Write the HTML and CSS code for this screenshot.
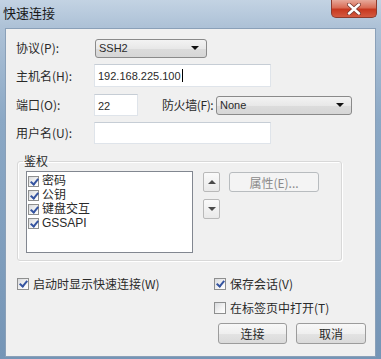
FILE: index.html
```html
<!DOCTYPE html>
<html>
  <head>
    <title>快速连接</title>
    <link rel="stylesheet" href="styles.css">
  </head>
  <body>
    <div class="window">
      <div class="titlebar">
        <span class="title">快速连接</span>
        <span class="close">
          <svg width="14" height="12" viewBox="0 0 14 12">
            <path d="M2 1.5 L12 10.5 M12 1.5 L2 10.5" stroke="#7a3a30" stroke-width="4" stroke-linecap="round"/>
            <path d="M2 1.5 L12 10.5 M12 1.5 L2 10.5" stroke="#ffffff" stroke-width="2.4" stroke-linecap="round"/>
          </svg>
        </span>
      </div>

      <div class="content">
        <div class="row row-proto">
          <span class="lbl">协议(P):</span>
          <div class="combo combo-proto">SSH2<span class="arrow"></span></div>
        </div>
        <div class="row row-host">
          <span class="lbl">主机名(H):</span>
          <div class="field field-wide">192.168.225.100<span class="caret"></span></div>
        </div>
        <div class="row row-port">
          <span class="lbl">端口(O):</span>
          <div class="field field-port">22</div>
          <span class="lbl-fw">防火墙(F):</span>
          <div class="combo combo-fw">None<span class="arrow"></span></div>
        </div>
        <div class="row row-user">
          <span class="lbl">用户名(U):</span>
          <div class="field field-wide"></div>
        </div>

        <fieldset class="group">
          <legend>鉴权</legend>
          <div class="auth">
            <ul class="list">
              <li><span class="cb on"></span>密码</li>
              <li><span class="cb on"></span>公钥</li>
              <li><span class="cb on"></span>键盘交互</li>
              <li><span class="cb on"></span>GSSAPI</li>
            </ul>
            <div class="arrows">
              <button class="btn-arrow"><span class="tri-up"></span></button>
              <button class="btn-arrow"><span class="tri-down"></span></button>
            </div>
            <button class="btn btn-prop">属性(E)...</button>
          </div>
        </fieldset>

        <div class="opts">
          <div class="opt"><span class="cb on"></span>启动时显示快速连接(W)</div>
          <div class="opt"><span class="cb on"></span>保存会话(V)</div>
          <div class="opt"></div>
          <div class="opt"><span class="cb"></span>在标签页中打开(T)</div>
        </div>

        <div class="actions">
          <button class="btn btn-ok">连接</button>
          <button class="btn btn-cancel">取消</button>
        </div>
      </div>
    </div>
  </body>
</html>
```

FILE: styles.css
```css
body {
  margin: 0;
  font-family: "Noto Sans CJK SC", "Liberation Sans", sans-serif;
  font-size: 12px;
  line-height: 14px;
  color: #2a2a2a;
}
.window {
  width: 381px;
  height: 359px;
  box-sizing: border-box;
  background: linear-gradient(to bottom, #c3d3e3 0, #aec2d7 26px, #8ba8c5 120px, #7595b6 100%);
  padding: 0 5px 2px 5px;
  display: flex;
  flex-direction: column;
}
.titlebar {
  height: 28px;
  display: flex;
  align-items: flex-start;
  justify-content: space-between;
}
.title {
  font-size: 13px;
  line-height: 14px;
  margin-top: 6px;
  margin-left: -2px;
  color: #1a1a1a;
}
.close {
  width: 44px;
  height: 17px;
  margin-right: -1px;
  border: 1px solid #8d3b2d;
  border-top: none;
  border-radius: 0 0 5px 5px;
  background: linear-gradient(to bottom, #e7a99a 0, #d96c55 45%, #c7381f 55%, #d45a40 100%);
  display: flex;
  align-items: center;
  justify-content: center;
}
.content {
  flex: 1;
  background: #f0f0f0;
  border: 1px solid #8aa0b8;
  padding: 8px 9px 0 10px;
  display: flex;
  flex-direction: column;
}
.row {
  display: flex;
  align-items: center;
  height: 22px;
}
.row-host {
  height: 23px;
  margin-top: 5px;
}
.row-port {
  margin-top: 7px;
}
.row-user {
  margin-top: 6px;
}
.lbl {
  width: 78px;
  white-space: nowrap;
}
.lbl-fw {
  margin-left: 24px;
  width: 54px;
  white-space: nowrap;
  letter-spacing: -0.4px;
}
.field {
  box-sizing: border-box;
  height: 100%;
  background: #fff;
  border: 1px solid #dfe4ea;
  border-top-color: #c6cdd5;
  font-family: "Liberation Sans", sans-serif;
  font-size: 11px;
  padding: 4px 3px 0 3px;
  display: flex;
  align-items: flex-start;
}
.field-wide {
  width: 177px;
}
.field-port {
  width: 44px;
}
.caret {
  width: 1px;
  height: 13px;
  background: #000;
  margin-left: 1px;
}
.combo {
  box-sizing: border-box;
  height: 19px;
  border: 1px solid #8a8a8a;
  border-radius: 3px;
  background: linear-gradient(to bottom, #f3f3f3 0, #e8e8e8 50%, #dcdcdc 51%, #d6d6d6 100%);
  font-family: "Liberation Sans", sans-serif;
  font-size: 11px;
  padding-left: 3px;
  display: flex;
  align-items: center;
  justify-content: space-between;
}
.combo-proto {
  width: 112px;
  margin-left: 1px;
}
.combo-fw {
  width: 136px;
}
.arrow {
  width: 0;
  height: 0;
  border-left: 4px solid transparent;
  border-right: 4px solid transparent;
  border-top: 4px solid #111;
  margin-right: 7px;
}
.group {
  margin: 10px 0 0 1px;
  width: 325px;
  box-sizing: border-box;
  border: 1px solid #d8d8d8;
  box-shadow: inset 1px 1px 0 #fff, 1px 1px 0 #fff;
  border-radius: 3px;
  padding: 3px 8px 7px 8px;
}
.group legend {
  padding: 0 1px;
  margin-left: -3px;
  line-height: 14px;
}
.auth {
  display: flex;
  align-items: flex-start;
}
.list {
  list-style: none;
  margin: 0;
  padding: 2px 0 0 1px;
  width: 167px;
  height: 82px;
  box-sizing: border-box;
  background: #fff;
  border: 1px solid #828790;
  font-family: "Liberation Sans", "Noto Sans CJK SC", sans-serif;
}
.list li {
  display: flex;
  align-items: center;
  height: 14px;
  line-height: 14px;
}
.list li .cb {
  margin-right: 3px;
}
.cb {
  width: 11px;
  height: 11px;
  box-sizing: border-box;
  border: 1px solid #8e8f8f;
  background: linear-gradient(135deg, #d8dadd 0, #f4f4f4 60%, #ffffff 100%);
  display: inline-block;
  position: relative;
  flex-shrink: 0;
}
.cb.on::after {
  content: "";
  position: absolute;
  left: 3px;
  top: 0px;
  width: 3px;
  height: 6px;
  border-right: 2px solid #3554a0;
  border-bottom: 2px solid #3554a0;
  transform: rotate(40deg);
}
.arrows {
  display: flex;
  flex-direction: column;
  gap: 7px;
  margin-left: 10px;
  margin-top: 1px;
}
.btn-arrow {
  width: 17px;
  height: 20px;
  padding: 0;
  border: 1px solid #b9b9b9;
  border-radius: 2px;
  background: linear-gradient(to bottom, #fafafa, #e9e9e9);
  display: flex;
  align-items: center;
  justify-content: center;
}
.tri-up {
  border-left: 4px solid transparent;
  border-right: 4px solid transparent;
  border-bottom: 4px solid #4a4a4a;
}
.tri-down {
  border-left: 4px solid transparent;
  border-right: 4px solid transparent;
  border-top: 4px solid #4a4a4a;
}
.btn {
  font-family: "Noto Sans CJK SC", "Liberation Sans", sans-serif;
  font-size: 12px;
  padding: 0;
  border-radius: 3px;
  border: 1px solid #9c9c9c;
  background: linear-gradient(to bottom, #f8f8f8 0, #efefef 50%, #e3e3e3 51%, #dadada 100%);
  color: #2a2a2a;
}
.btn-prop {
  width: 90px;
  height: 20px;
  margin-left: 9px;
  margin-top: 1px;
  border-color: #b8bcbf;
  background: #f4f4f4;
  color: #8a8a8a;
}
.opts {
  display: grid;
  grid-template-columns: 197px auto;
  row-gap: 10px;
  margin-top: 16px;
  margin-left: 1px;
}
.opt {
  display: flex;
  align-items: center;
  height: 14px;
}
.opt .cb {
  margin-right: 4px;
  width: 12px;
  height: 12px;
}
.actions {
  display: flex;
  justify-content: flex-end;
  gap: 9px;
  margin-top: 8px;
}
.btn-ok {
  width: 69px;
  height: 21px;
}
.btn-cancel {
  width: 70px;
  height: 21px;
}
```
